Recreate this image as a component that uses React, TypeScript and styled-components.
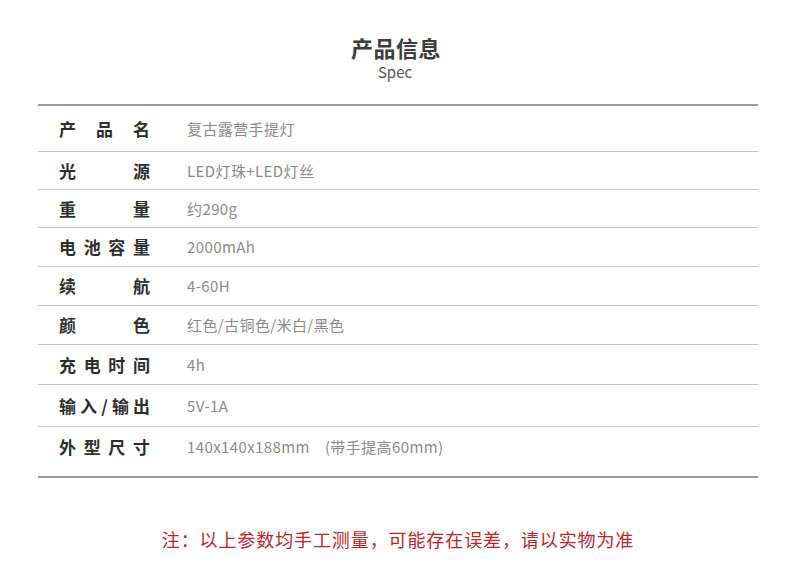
import React from "react";
import styled, { createGlobalStyle } from "styled-components";

const Global = createGlobalStyle`
  html, body { margin: 0; padding: 0; background: #ffffff; }
  body { font-family: "Noto Sans CJK SC", "Noto Sans", sans-serif; }
`;

const Page = styled.div`
  width: 790px;
  height: 566px;
  display: flex;
  flex-direction: column;
  align-items: stretch;
  overflow: hidden;
`;

const Header = styled.header`
  display: flex;
  flex-direction: column;
  align-items: center;
  padding-top: 33px;
`;

const Title = styled.h1`
  margin: 0 0 0 2px;
  font-size: 22px;
  line-height: 28px;
  font-weight: 700;
  color: #3d3d3d;
  letter-spacing: 0.5px;
`;

const Subtitle = styled.div`
  margin-top: 2px;
  font-size: 15px;
  line-height: 18px;
  color: #555555;
`;

const Table = styled.div`
  margin: 23px 0 0 38px;
  width: 720px;
  border-top: 2px solid #9a9a9a;
  display: flex;
  flex-direction: column;
`;

const Row = styled.div<{ $h: number; $last?: boolean }>`
  height: ${(p) => p.$h}px;
  box-sizing: border-box;
  display: flex;
  align-items: center;
  padding-left: 21px;
  padding-bottom: ${(p) => (p.$last ? 10 : 0)}px;
  border-bottom: ${(p) => (p.$last ? "2px solid #9a9a9a" : "1px solid #c4c4c4")};
`;

const Label = styled.div`
  width: 91px;
  flex-shrink: 0;
  font-size: 17px;
  font-weight: 700;
  color: #2e2e2e;
  text-align: justify;
  text-align-last: justify;
  text-justify: inter-character;
  line-height: 22px;
`;

const Value = styled.div`
  margin-left: 37px;
  font-size: 15px;
  color: #8a8a8a;
  letter-spacing: 0.4px;
  line-height: 20px;
  white-space: pre;
`;

const Note = styled.p`
  margin: 49px 0 0 6px;
  text-align: center;
  font-size: 18px;
  letter-spacing: 0.9px;
  color: #b8262b;
  line-height: 24px;
`;

const rows: { label: string; value: string; h: number }[] = [
  { label: "产品名", value: "复古露营手提灯", h: 46 },
  { label: "光源", value: "LED灯珠+LED灯丝", h: 38 },
  { label: "重量", value: "约290g", h: 38 },
  { label: "电池容量", value: "2000mAh", h: 39 },
  { label: "续航", value: "4-60H", h: 39 },
  { label: "颜色", value: "红色/古铜色/米白/黑色", h: 39 },
  { label: "充电时间", value: "4h", h: 40 },
  { label: "输入/输出", value: "5V-1A", h: 42 },
  { label: "外型尺寸", value: "140x140x188mm    (带手提高60mm)", h: 51 },
];

export default function App() {
  return (
    <Page>
      <Global />
      <Header>
        <Title>产品信息</Title>
        <Subtitle>Spec</Subtitle>
      </Header>
      <Table>
        {rows.map((r, i) => (
          <Row key={r.label} $h={r.h} $last={i === rows.length - 1}>
            <Label>{r.label}</Label>
            <Value>{r.value}</Value>
          </Row>
        ))}
      </Table>
      <Note>注：以上参数均手工测量，可能存在误差，请以实物为准</Note>
    </Page>
  );
}
